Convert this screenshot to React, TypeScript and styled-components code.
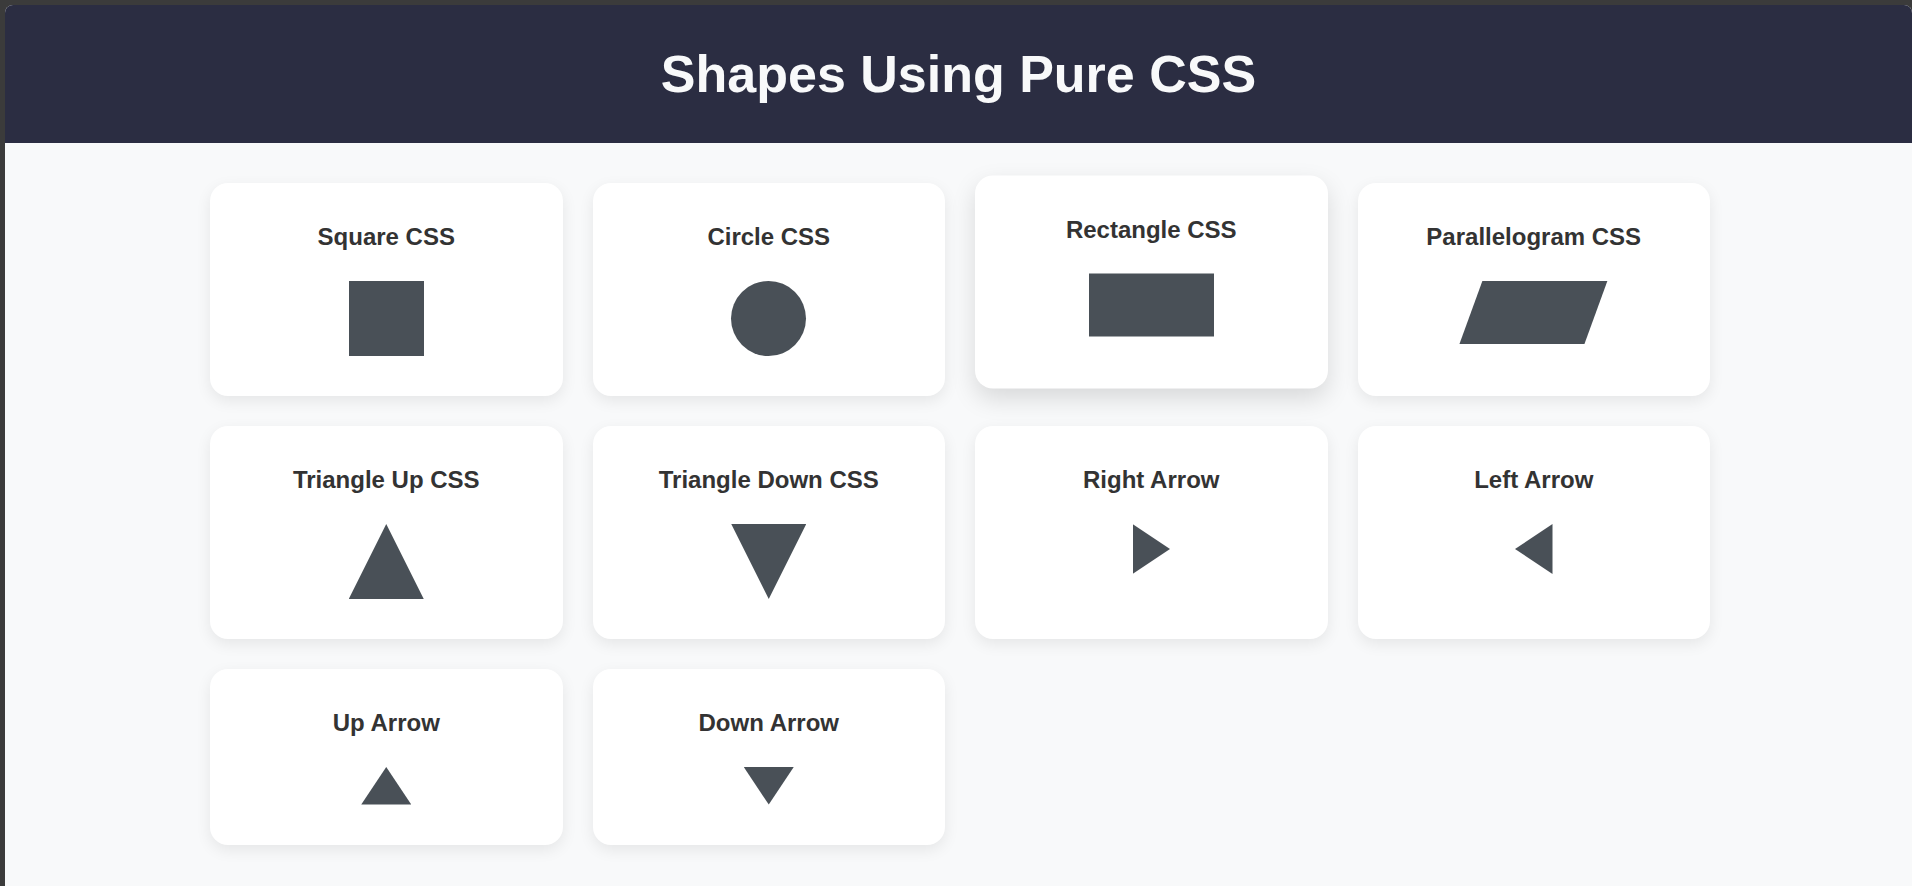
import styled, { createGlobalStyle, css } from 'styled-components';

const GlobalStyle = createGlobalStyle`
    html,
    body {
        margin: 0;
        padding: 0;
    }

    body {
        background: #3b3b3b;
        font-family: 'Liberation Sans', Arial, Helvetica, sans-serif;
    }

    * {
        box-sizing: border-box;
    }
`;

const Frame = styled.div`
    min-height: 100vh;
    padding: 5px 0 0 5px;
    background: #3b3b3b;
`;

const Window = styled.div`
    min-height: calc(100vh - 5px);
    background: #f8f9fa;
    border-radius: 8px 8px 0 0;
    overflow: hidden;
`;

const Header = styled.header`
    padding: 39px 20px;
    background: #2b2d42;
    text-align: center;
`;

const Title = styled.h1`
    margin: 0;
    color: #f8f9fa;
    font-size: 52px;
    font-weight: 700;
    line-height: normal;
`;

const Main = styled.main`
    display: flex;
    justify-content: center;
    padding: 40px 0 40px 3px;
`;

const Grid = styled.div`
    display: grid;
    grid-template-columns: repeat(4, 1fr);
    gap: 30px;
    width: 1500px;
`;

const Card = styled.div<{ $lifted?: boolean }>`
    display: flex;
    flex-direction: column;
    align-items: center;
    padding: 40px;
    background: #ffffff;
    border-radius: 18px;
    box-shadow: 0 5px 15px rgba(0, 0, 0, 0.08);
    transition: transform 0.3s ease, box-shadow 0.3s ease;

    ${({ $lifted }) =>
        $lifted &&
        css`
            transform: translateY(-7.5px);
            box-shadow: 0 10px 25px rgba(0, 0, 0, 0.13);
        `}
`;

const CardTitle = styled.h3`
    margin: 0 0 30px;
    color: #333333;
    font-size: 24px;
    font-weight: 700;
    line-height: normal;
    text-align: center;
`;

const shapeBase = css`
    flex: none;
    background: #495057;
`;

const Square = styled.div`
    ${shapeBase}
    width: 75px;
    height: 75px;
`;

const Circle = styled.div`
    ${shapeBase}
    width: 75px;
    height: 75px;
    border-radius: 50%;
`;

const Rectangle = styled.div`
    ${shapeBase}
    width: 125px;
    height: 62.5px;
`;

const Parallelogram = styled.div`
    ${shapeBase}
    width: 125px;
    height: 62.5px;
    transform: skew(-20deg);
`;

// triangles: width/height vary between the big shapes and the small arrows
const TriangleUp = styled.div<{ $w: number; $h: number }>`
    ${shapeBase}
    width: ${({ $w }) => $w}px;
    height: ${({ $h }) => $h}px;
    clip-path: polygon(50% 0, 100% 100%, 0 100%);
`;

const TriangleDown = styled.div<{ $w: number; $h: number }>`
    ${shapeBase}
    width: ${({ $w }) => $w}px;
    height: ${({ $h }) => $h}px;
    clip-path: polygon(0 0, 100% 0, 50% 100%);
`;

const ArrowRight = styled.div`
    ${shapeBase}
    width: 37.5px;
    height: 50px;
    clip-path: polygon(0 0, 100% 50%, 0 100%);
`;

const ArrowLeft = styled.div`
    ${shapeBase}
    width: 37.5px;
    height: 50px;
    clip-path: polygon(100% 0, 100% 100%, 0 50%);
`;

const shapes = [
    { title: 'Square CSS', shape: <Square /> },
    { title: 'Circle CSS', shape: <Circle /> },
    { title: 'Rectangle CSS', shape: <Rectangle />, lifted: true },
    { title: 'Parallelogram CSS', shape: <Parallelogram /> },
    { title: 'Triangle Up CSS', shape: <TriangleUp $w={75} $h={75} /> },
    { title: 'Triangle Down CSS', shape: <TriangleDown $w={75} $h={75} /> },
    { title: 'Right Arrow', shape: <ArrowRight /> },
    { title: 'Left Arrow', shape: <ArrowLeft /> },
    { title: 'Up Arrow', shape: <TriangleUp $w={50} $h={37.5} /> },
    { title: 'Down Arrow', shape: <TriangleDown $w={50} $h={37.5} /> },
];

export default function App() {
    return (
        <>
            <GlobalStyle />
            <Frame>
                <Window>
                    <Header>
                        <Title>Shapes Using Pure CSS</Title>
                    </Header>
                    <Main>
                        <Grid>
                            {shapes.map(item => (
                                <Card key={item.title} $lifted={item.lifted}>
                                    <CardTitle>{item.title}</CardTitle>
                                    {item.shape}
                                </Card>
                            ))}
                        </Grid>
                    </Main>
                </Window>
            </Frame>
        </>
    );
}
